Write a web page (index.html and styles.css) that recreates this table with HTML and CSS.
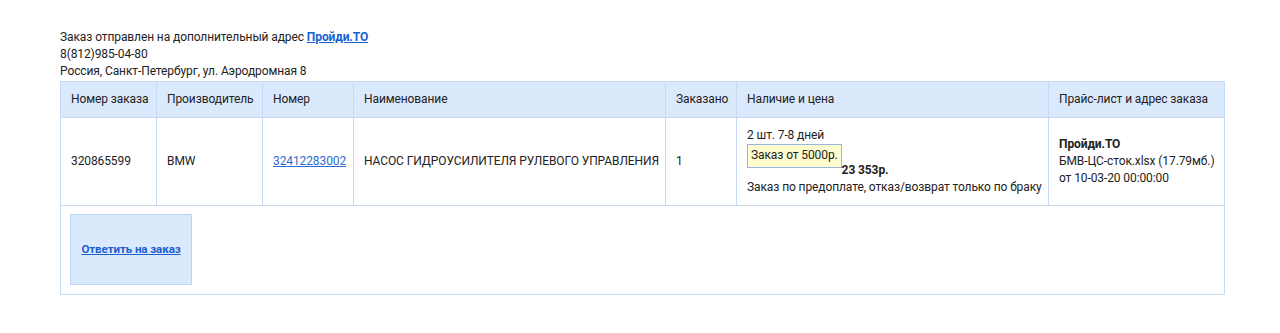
FILE: index.html
```html
<!DOCTYPE html>
<html lang="ru">
<head>
<meta charset="utf-8">
<title>Заказ</title>
<link rel="stylesheet" href="styles.css">
</head>
<body>
<div class="page">
  <div class="info">
    <div>Заказ отправлен на дополнительный адрес <a class="strong-link" href="#">Пройди.ТО</a></div>
    <div>8(812)985-04-80</div>
    <div>Россия, Санкт-Петербург, ул. Аэродромная 8</div>
  </div>
  <table class="orders">
    <colgroup>
      <col class="c1">
      <col class="c2">
      <col class="c3">
      <col class="c4">
      <col class="c5">
      <col class="c6">
      <col class="c7">
    </colgroup>
    <thead>
      <tr>
        <th>Номер заказа</th>
        <th>Производитель</th>
        <th>Номер</th>
        <th>Наименование</th>
        <th>Заказано</th>
        <th>Наличие и цена</th>
        <th>Прайс-лист и адрес заказа</th>
      </tr>
    </thead>
    <tbody>
      <tr>
        <td>320865599</td>
        <td>BMW</td>
        <td><a class="plain-link" href="#">32412283002</a></td>
        <td>НАСОС ГИДРОУСИЛИТЕЛЯ РУЛЕВОГО УПРАВЛЕНИЯ</td>
        <td>1</td>
        <td>
          <div>2 шт. 7-8 дней</div>
          <div><span class="min-order">Заказ от 5000р.</span><b>23 353р.</b></div>
          <div>Заказ по предоплате, отказ/возврат только по браку</div>
        </td>
        <td>
          <div><b>Пройди.ТО</b></div>
          <div>БМВ-ЦС-сток.xlsx (17.79мб.)</div>
          <div>от 10-03-20 00:00:00</div>
        </td>
      </tr>
      <tr>
        <td class="actions" colspan="7">
          <a class="reply" href="#"><span>Ответить на заказ</span></a>
        </td>
      </tr>
    </tbody>
  </table>
</div>
</body>
</html>
```

FILE: styles.css
```css
html, body {
  margin: 0;
  padding: 0;
  background: #ffffff;
}

body {
  font-family: Roboto, "Liberation Sans", Arial, sans-serif;
  font-size: 12px;
  letter-spacing: -0.1px;
  line-height: 17px;
  color: #222222;
}

.page {
  padding: 29px 60px 0 60px;
}

.info {
  margin-bottom: 1px;
}

.strong-link {
  color: #1b5fd1;
  font-weight: bold;
  text-decoration: underline;
}

.plain-link {
  color: #2f6bcc;
  text-decoration: underline;
}

.orders {
  border-collapse: collapse;
  table-layout: fixed;
  width: 1164px;
  border: 1px solid #c8daf3;
}

.c1 { width: 96px; }
.c2 { width: 106px; }
.c3 { width: 91px; }
.c4 { width: 312px; }
.c5 { width: 71px; }
.c6 { width: 312px; }
.c7 { width: 176px; }

.orders th,
.orders td {
  border: 1px solid #c8daf3;
  padding: 9px 10px;
  text-align: left;
  white-space: nowrap;
  vertical-align: middle;
}

.orders th {
  background: #dbe9fc;
  font-weight: normal;
}

.min-order {
  display: inline-block;
  overflow: hidden;
  vertical-align: baseline;
  background: #fdfdd0;
  border: 1px solid #9bb6de;
  padding: 2px 3px 3px 3px;
  margin-bottom: 6px;
}

.orders td.actions {
  padding: 8px 9px 9px 9px;
}

.reply {
  display: flex;
  align-items: center;
  justify-content: center;
  width: 120px;
  height: 69px;
  background: #dbe9fc;
  border: 1px solid #bcd3f3;
  color: #1b5fd1;
  font-weight: bold;
  font-size: 11.6px;
  text-decoration: underline;
}
```
